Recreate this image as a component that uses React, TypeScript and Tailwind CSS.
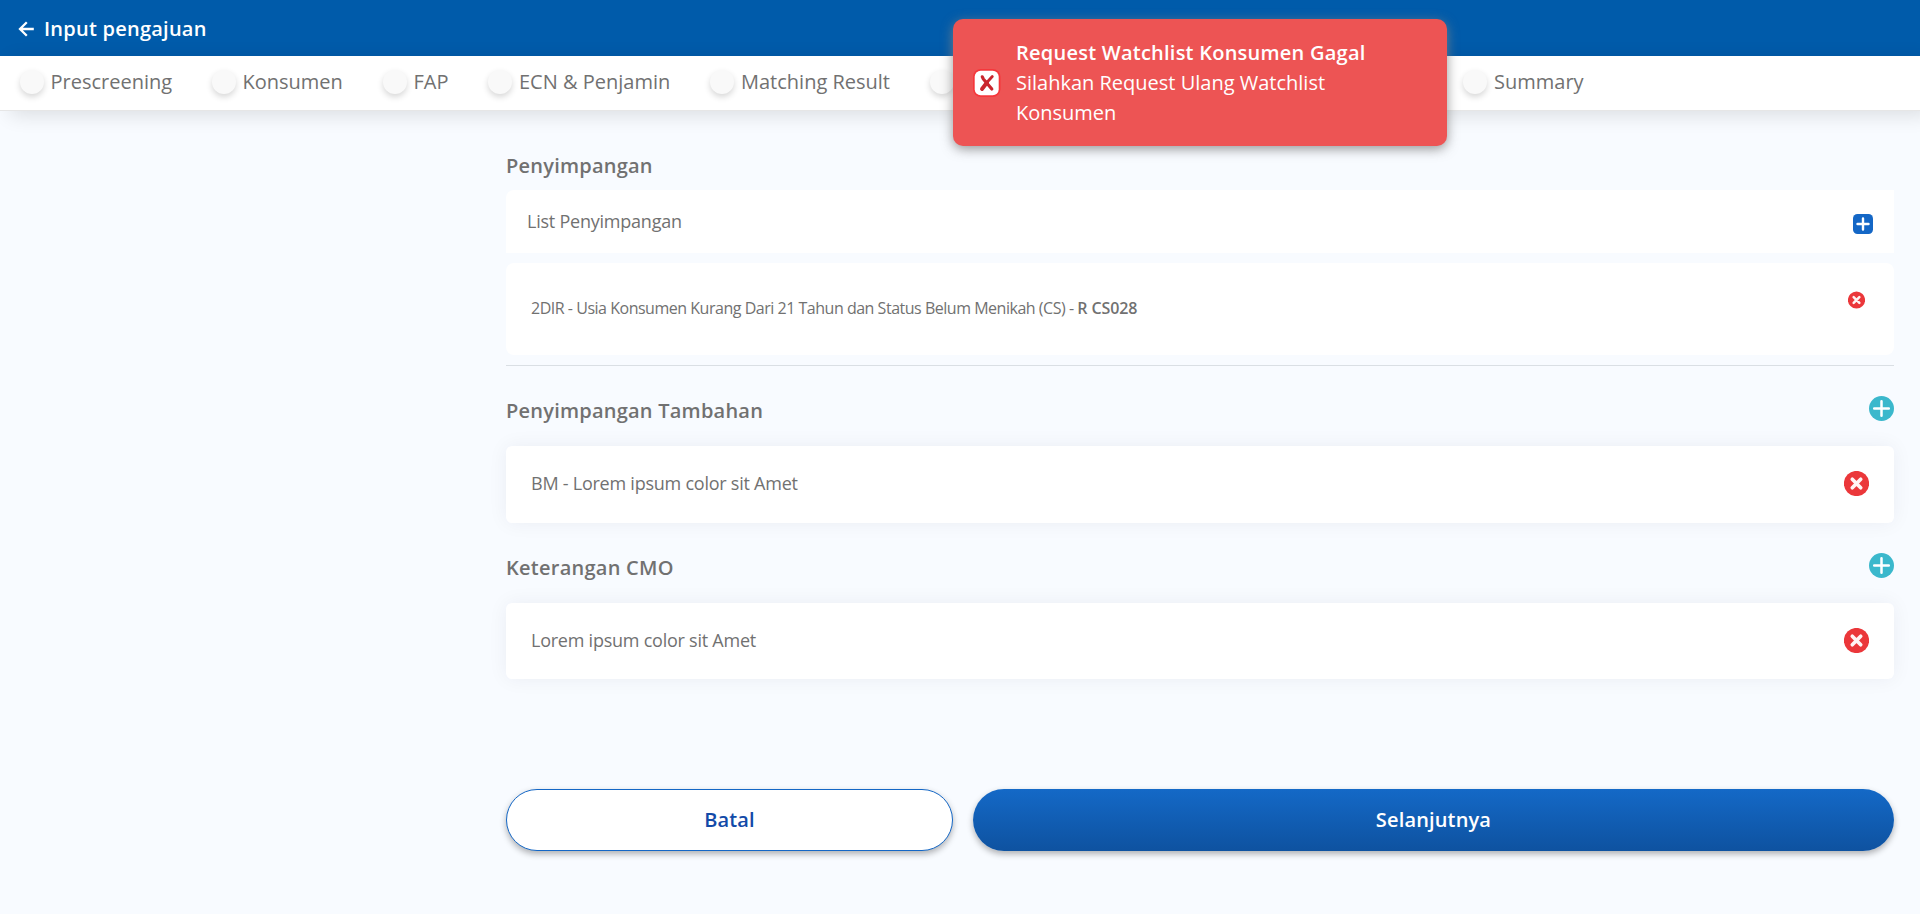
import React from "react";

const steps = [
  { label: "Prescreening", width: "w-[192px]" },
  { label: "Konsumen", width: "w-[171px]" },
  { label: "FAP", width: "w-[105.500px]" },
  { label: "ECN & Penjamin", width: "w-[222px]" },
  { label: "Matching Result", width: "w-[219.500px]" },
  { label: "", width: "w-[533.500px]" },
  { label: "Summary", width: "w-[180px]" },
];

function BackArrow() {
  return (
    <svg className="mt-px h-4 w-4" viewBox="0 0 16 16" fill="none" stroke="white" strokeWidth="2.3">
      <path d="M15.8 8H2M8.800 1.200L2 8l6.800 6.800" />
    </svg>
  );
}

function PlusCircle() {
  return (
    <svg className="size-[25px] shrink-0" viewBox="0 0 25 25">
      <circle cx="12.500" cy="12.500" r="12.500" fill="#3bb8cc" />
      <path d="M12.500 5.200v14.600M5.200 12.500h14.600" stroke="white" strokeWidth="2.500" strokeLinecap="round" />
    </svg>
  );
}

function PlusSquare() {
  return (
    <svg className="mt-[5px] size-5 shrink-0" viewBox="0 0 20 20">
      <rect width="20" height="20" rx="4.500" fill="#1467c6" />
      <path d="M10 4.500v11M4.500 10h11" stroke="white" strokeWidth="2.400" strokeLinecap="round" />
    </svg>
  );
}

function RemoveIcon({ className }: { className: string }) {
  return (
    <svg className={className} viewBox="0 0 25 25">
      <circle cx="12.500" cy="12.500" r="12.600" fill="#eb373a" />
      <path d="M8.300 8.300l8.400 8.400M16.700 8.300l-8.400 8.400" stroke="#fff4f4" strokeWidth="3.700" strokeLinecap="round" />
    </svg>
  );
}

function ErrorIcon() {
  return (
    <svg className="size-[28px] shrink-0" viewBox="0 0 28 28">
      <rect x="0" y="0" width="27.500" height="28" rx="8" fill="#f5373b" />
      <rect x="1.700" y="1.700" width="24" height="24.500" rx="6" fill="white" />
      <path d="M9.300 7.800l1 2.200 8.500 10" fill="none" stroke="#c9262d" strokeWidth="3.200" strokeLinecap="round" />
      <path d="M19.300 7.500l-5.500 6" stroke="#c9262d" strokeWidth="2.800" strokeLinecap="round" />
      <path d="M14 13.500l-5 6.500" stroke="#c9262d" strokeWidth="3.900" strokeLinecap="round" />
    </svg>
  );
}

function NoteCard({ text, height }: { text: string; height: string }) {
  return (
    <div className={`flex ${height} items-center justify-between rounded-md bg-white px-[25px] pb-[2px] shadow-[0_0_20px_rgba(0,30,60,0.06)]`}>
      <span className="text-[18px] tracking-[-0.240px]">{text}</span>
      <RemoveIcon className="size-[25px]" />
    </div>
  );
}

export default function App() {
  return (
    <div className="relative h-[914px] w-full overflow-hidden bg-[#f8fbff] font-['Open_Sans',sans-serif] text-[#717171]">
      <header className="flex h-14 items-center bg-[#005baa] pl-[18px] text-white">
        <BackArrow />
        <h1 className="mt-[2px] ml-[10px] text-[20px] font-semibold tracking-[0.240px]">Input pengajuan</h1>
      </header>
      <nav className="flex h-[55px] items-center border-b border-[#e6e6e6] bg-white pb-[2px] pl-[19.500px] text-[20px] shadow-[10px_4px_20px_rgba(0,0,0,0.12)]">
        {steps.map((s, i) => (
          <div key={i} className={`flex ${s.width} shrink-0 items-center gap-[7px]`}>
            <span className="size-6 rounded-full bg-[#f9f9f9] shadow-[0_3px_6px_rgba(0,0,0,0.16)]" />
            <span>{s.label}</span>
          </div>
        ))}
      </nav>

      <main className="mr-[26px] ml-[506px] pt-[39px]">
        <section>
          <h2 className="h-10 pt-px text-[20px] leading-[30px] font-semibold tracking-[0.230px]">Penyimpangan</h2>
          <div className="flex h-[63px] items-center justify-between rounded-tl-lg bg-white px-[21px]">
            <span className="text-[18px] tracking-[-0.230px]">List Penyimpangan</span>
            <PlusSquare />
          </div>
          <div className="mt-[10px] flex h-[92px] items-center justify-between rounded-lg bg-white pr-[29px] pl-[25px]">
            <p className="mb-[2px] text-[16px] tracking-[-0.480px]">
              2DIR - Usia Konsumen Kurang Dari 21 Tahun dan Status Belum Menikah (CS) -{" "}
              <b className="font-semibold tracking-[-0.100px]">R CS028</b>
            </p>
            <RemoveIcon className="mb-[18px] h-[18px] w-[17px]" />
          </div>
          <hr className="mt-[10px] border-[#dadfe4]" />
        </section>

        <section className="mt-[30px]">
          <div className="flex h-[50px] justify-between">
            <h2 className="text-[20px] leading-[30px] font-semibold tracking-[0.230px]">Penyimpangan Tambahan</h2>
            <PlusCircle />
          </div>
          <NoteCard height="h-[77px]" text="BM - Lorem ipsum color sit Amet" />
        </section>

        <section className="mt-[30px]">
          <div className="flex h-[50px] justify-between">
            <h2 className="text-[20px] leading-[30px] font-semibold tracking-[0.260px]">Keterangan CMO</h2>
            <PlusCircle />
          </div>
          <NoteCard height="h-[76px]" text="Lorem ipsum color sit Amet" />
        </section>

        <div className="mt-[110px] flex gap-[20px] text-[20px] font-semibold tracking-[0.150px]">
          <button className="h-[62px] w-[447px] rounded-full border border-[#1467c6] bg-white text-[#124aa8] shadow-[0_3px_6px_rgba(0,0,0,0.3)]">
            Batal
          </button>
          <button className="h-[62px] flex-1 rounded-full bg-linear-to-b from-[#1469c7] to-[#0e52a0] text-white shadow-[0_3px_6px_rgba(0,0,0,0.3)]">
            Selanjutnya
          </button>
        </div>
      </main>

      <div className="absolute top-[19px] left-[953px] flex h-[127px] w-[494px] items-center rounded-[10px] bg-[#ed5454] pl-5 text-white shadow-[0_3px_12px_rgba(130,130,130,0.850)]">
        <ErrorIcon />
        <div className="ml-[15px] text-[20px] leading-[30px]">
          <p className="font-semibold tracking-[0.240px]">Request Watchlist Konsumen Gagal</p>
          <p className="w-[370px]">Silahkan Request Ulang Watchlist Konsumen</p>
        </div>
      </div>
    </div>
  );
}
